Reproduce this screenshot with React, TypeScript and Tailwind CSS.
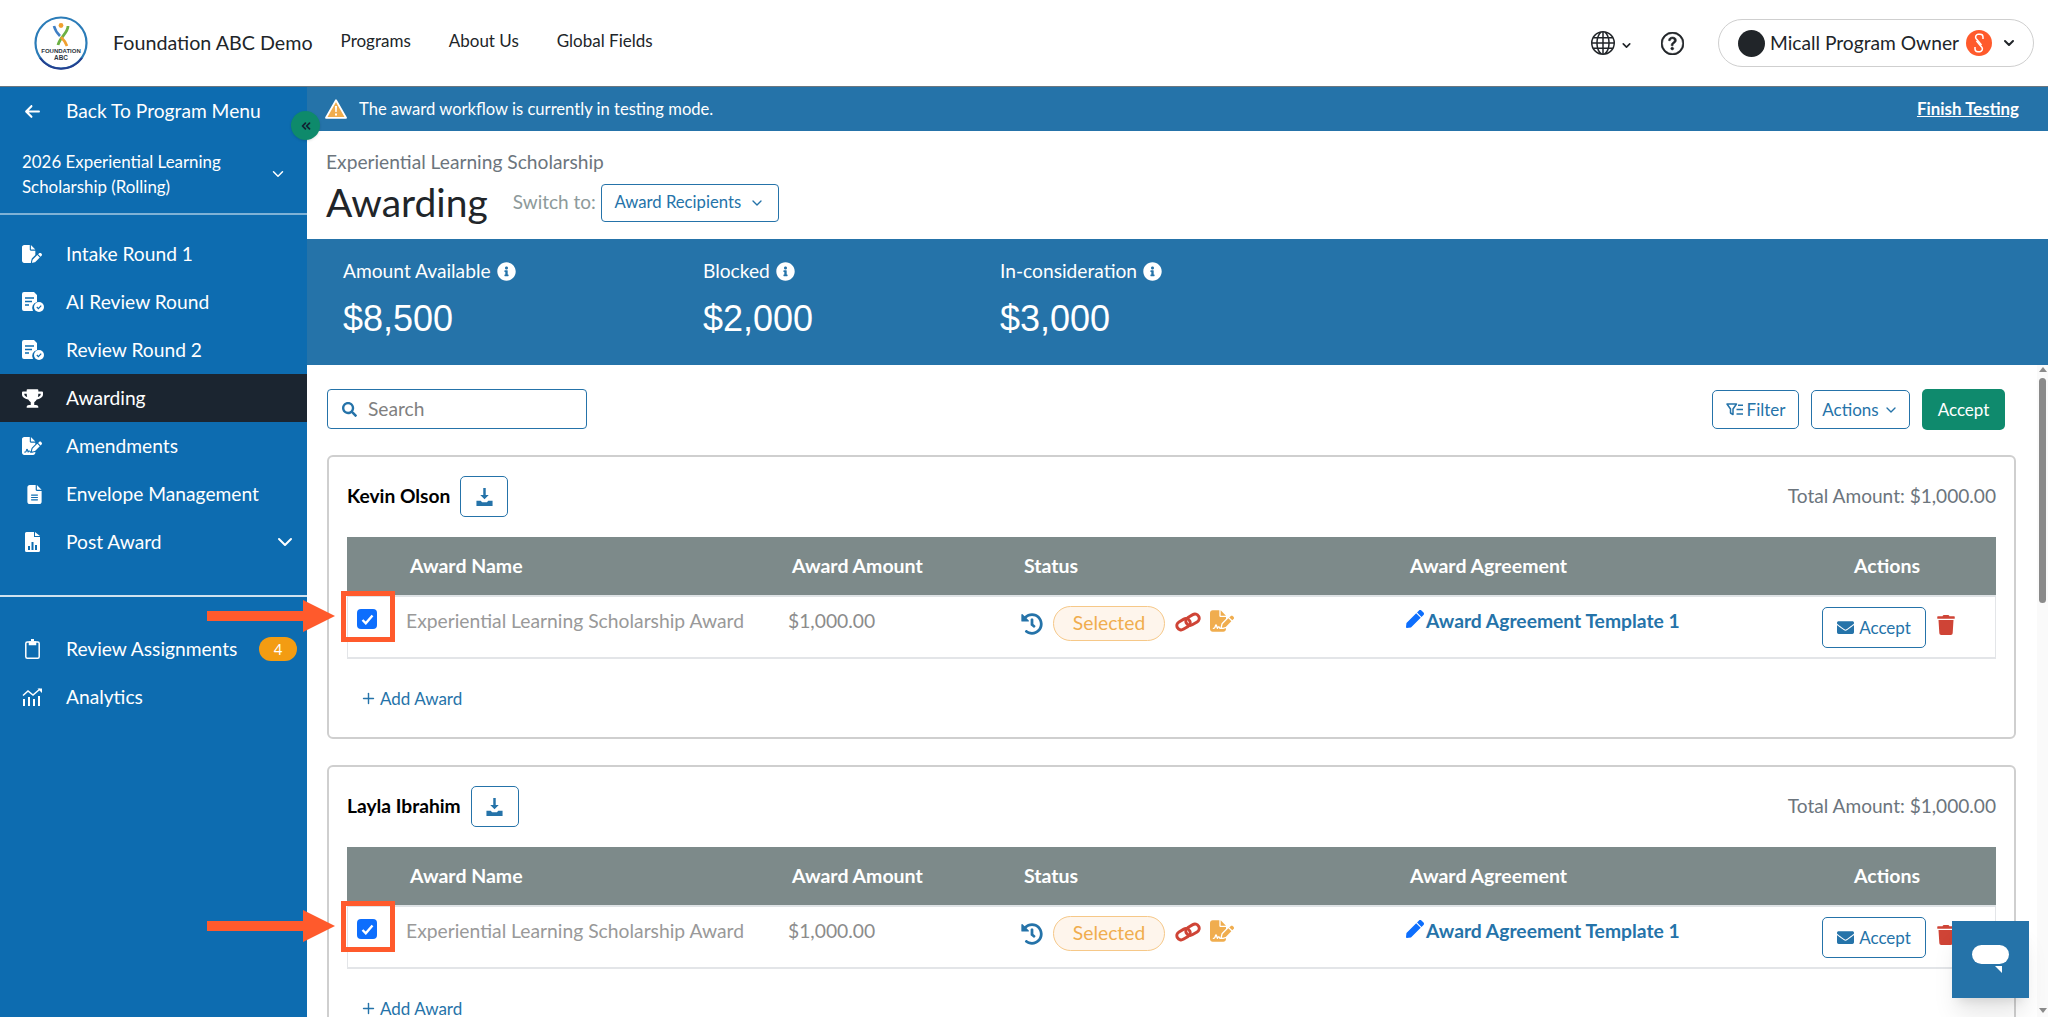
import { ChevronDown, ChevronsLeft, Plus } from "lucide-react";
import { BsGlobe, BsQuestionCircle } from "react-icons/bs";
import {
  FaEnvelope,
  FaHistory,
  FaInfoCircle,
  FaPen,
  FaSearch,
  FaTrash,
  FaTrophy,
} from "react-icons/fa";
import { FaArrowLeft, FaFileLines, FaFilePen, FaFileSignature } from "react-icons/fa6";

/* ---------------- Drawn icons ---------------- */

function ReviewIcon() {
  return (
    <svg width="22" height="20" viewBox="0 0 22 20">
      <path d="M2 0h10l3 3v7a6 6 0 0 0-4 9H2a2 2 0 0 1-2-2V2a2 2 0 0 1 2-2z" fill="#fff" />
      <path d="M3 6h9M3 9.5h7M3 13h4" stroke="#0d6cb0" strokeWidth="1.6" />
      <circle cx="17" cy="15" r="5" fill="#fff" />
      <path d="M14.8 15l1.6 1.6 2.8-3" stroke="#0d6cb0" strokeWidth="1.2" fill="none" />
    </svg>
  );
}

function ChartFileIcon() {
  return (
    <svg width="15" height="20" viewBox="0 0 15 20">
      <path d="M1.5 0H9v5h6v13.5a1.5 1.5 0 0 1-1.5 1.5h-12A1.5 1.5 0 0 1 0 18.5v-17A1.5 1.5 0 0 1 1.5 0zM10 0l5 4h-5z" fill="#fff" />
      <path d="M3 14h2v4H3zM6.5 10h2v8h-2zM10 13h2v5h-2z" fill="#0d6cb0" />
    </svg>
  );
}

function ClipboardIcon() {
  return (
    <svg width="15" height="20" viewBox="0 0 15 20" fill="none" stroke="#fff" strokeWidth="1.5">
      <rect x="0.8" y="3" width="13.4" height="16.2" rx="1.5" />
      <path d="M4.5 3h6v2.5h-6z" fill="#fff" />
      <path d="M6 1h3" strokeWidth="2" />
    </svg>
  );
}

function AnalyticsIcon() {
  return (
    <svg width="20" height="18" viewBox="0 0 20 18" fill="#fff">
      <path d="M1 11h2v7H1zM6 9h2v9H6zM11 11h2v7h-2zM16 8h2v10h-2z" />
      <path d="M1 7.5l5-4.5 5 4 7-6" stroke="#fff" strokeWidth="1.5" fill="none" />
      <path d="M15.5 0.5H20V5z" />
    </svg>
  );
}

function WarningIcon() {
  return (
    <svg width="22" height="20" viewBox="0 0 22 20">
      <path d="M11 1.2L21 18.8H1z" fill="#f0ad4e" stroke="#fff" strokeWidth="1.8" strokeLinejoin="round" />
      <path d="M10 7h2l-.3 6h-1.4zM10 14.4h2v2h-2z" fill="#fff" />
    </svg>
  );
}

function DownloadIcon() {
  return (
    <svg width="17" height="18" viewBox="0 0 17 19" fill="#2573a9">
      <path d="M7.2 0h2.6v7.5H13L8.5 12 4 7.5h3.2z" />
      <path d="M0 13.5h4.5L6 15h5l1.5-1.5H17V19H0z" />
    </svg>
  );
}

function FilterIcon() {
  return (
    <svg width="17" height="13" viewBox="0 0 17 13" fill="none" stroke="#2573a9" strokeWidth="1.5">
      <path d="M1 1h9.5L7 6v5.5L4.5 10V6z" strokeLinejoin="round" />
      <path d="M12 2.2h5M10.5 6.5H17M10.5 11H17" />
    </svg>
  );
}

function ChainIcon() {
  return (
    <svg width="26" height="20" viewBox="0 0 26 20" fill="none" stroke="#cf4436" strokeWidth="3">
      <rect x="1.5" y="8" width="14" height="8.5" rx="4.2" transform="rotate(-30 8.5 12.2)" />
      <rect x="10.5" y="3.5" width="14" height="8.5" rx="4.2" transform="rotate(-30 17.5 7.7)" />
    </svg>
  );
}

function Logo() {
  return (
    <svg width="54" height="54" viewBox="0 0 54 54" className="[font-family:'Liberation_Sans',sans-serif]">
      <circle cx="27" cy="27" r="25.5" fill="#fff" stroke="#2b7cb8" strokeWidth="2.2" />
      <path d="M6 42a26 26 0 0 0 42 0" fill="none" stroke="#253f8f" strokeWidth="2" />
      <circle cx="27" cy="9.5" r="2.4" fill="#f0a030" />
      <path d="M20 10c1 4 3 7 6 10" stroke="#3f7fc4" strokeWidth="2.6" fill="none" />
      <path d="M34 10c0 7-8 11-10 19" stroke="#6cb043" strokeWidth="2.8" fill="none" />
      <path d="M27 21c3 3 5 6 6 9" stroke="#f0a030" strokeWidth="2.6" fill="none" />
      <text x="27" y="37" textAnchor="middle" fontSize="6" fontWeight="700" fill="#2b3440">FOUNDATION</text>
      <text x="27" y="44" textAnchor="middle" fontSize="6.4" fontWeight="700" fill="#2b3440">ABC</text>
    </svg>
  );
}

/* ---------------- Sidebar ---------------- */

function NavItem({ icon, label, active, children }: any) {
  return (
    <div className={`flex items-center h-12 pl-[22px] pr-[10px] ${active ? "bg-[#1b2530]" : ""}`}>
      <span className="w-[44px] flex items-center">{icon}</span>
      <span className="flex-1 text-white text-[19.2px]">{label}</span>
      {children}
    </div>
  );
}

function Sidebar() {
  return (
    <aside className="w-[307px] shrink-0 bg-[#0d6cb0] text-white h-full relative">
      <div className="flex items-center h-[48px] pl-[24px]">
        <FaArrowLeft size={17} className="mr-[25px]" />
        <span className="text-[19.2px]">Back To Program Menu</span>
      </div>
      <div className="flex items-center h-[80px] border-b-2 border-[#7fb2d6] pl-[22px] pr-[20px]">
        <span className="flex-1 text-[16.9px] leading-[25px]">
          2026 Experiential Learning
          <br />
          Scholarship (Rolling)
        </span>
        <ChevronDown size={18} />
      </div>
      <div className="pt-[15px]">
        <NavItem icon={<FaFilePen size={20} />} label="Intake Round 1" />
        <NavItem icon={<ReviewIcon />} label="AI Review Round" />
        <NavItem icon={<ReviewIcon />} label="Review Round 2" />
        <NavItem icon={<FaTrophy size={21} />} label="Awarding" active />
        <NavItem icon={<FaFileSignature size={20} />} label="Amendments" />
        <NavItem icon={<span className="pl-[3px]"><FaFileLines size={19} /></span>} label="Envelope Management" />
        <NavItem icon={<span className="pl-[3px] flex"><ChartFileIcon /></span>} label="Post Award">
          <ChevronDown size={24} strokeWidth={2} />
        </NavItem>
      </div>
      <div className="mt-[29px] border-t-2 border-[#cfe2ef] pt-[28px]">
        <NavItem icon={<span className="pl-[3px] flex"><ClipboardIcon /></span>} label="Review Assignments">
          <span className="w-[38px] h-[24px] rounded-full bg-[#f39c12] flex items-center justify-center text-[15px]">4</span>
        </NavItem>
        <NavItem icon={<span className="flex"><AnalyticsIcon /></span>} label="Analytics" />
      </div>
      {/* collapse toggle sits over the sidebar edge */}
      <div className="absolute left-[291px] top-[24px] w-[29px] h-[29px] rounded-full bg-[#0e8a6b] flex items-center justify-center shadow z-10">
        <ChevronsLeft size={14} strokeWidth={3} className="text-[#123]" />
      </div>
    </aside>
  );
}

/* ---------------- Main parts ---------------- */

function Stat({ label, value, width }: any) {
  return (
    <div className={width}>
      <div className="flex items-center gap-[6px] text-[19.2px] text-white leading-[24px]">
        {label}
        <FaInfoCircle size={19} />
      </div>
      <div className="mt-[16px] text-white text-[36px] leading-[40px] [font-family:'Liberation_Sans',Arial,sans-serif]">
        {value}
      </div>
    </div>
  );
}

function AwardCard({ name }: any) {
  return (
    <section className="border-2 border-[#cfcfcf] rounded-[6px] bg-white h-[284px] px-[18px] pt-[18px]">
      <div className="flex items-center h-[43px]">
        <span className="font-bold text-black text-[19.2px]">{name}</span>
        <button className="ml-[10px] w-[48px] h-[41px] border border-[#2573a9] rounded-[5px] flex items-center justify-center">
          <DownloadIcon />
        </button>
        <span className="ml-auto text-[19.1px] text-[#6c757d]">Total Amount: $1,000.00</span>
      </div>
      <div className="mt-[19px] grid grid-cols-[58px_382px_233px_385px_416px_1fr] h-[60px] items-center bg-[#7d8a8a] text-white font-bold text-[19.5px] border-b-2 border-[#dfe3e6]">
        <span />
        <span className="pl-[5px]">Award Name</span>
        <span className="pl-[5px]">Award Amount</span>
        <span className="pl-[4px]">Status</span>
        <span className="pl-[5px]">Award Agreement</span>
        <span className="pl-[33px]">Actions</span>
      </div>
      <div className="relative grid grid-cols-[58px_382px_233px_385px_416px_1fr] h-[62px] border-x border-b-2 border-[#e3e5e8] text-[19.3px] text-[#999]">
        <div className="relative pl-[9px] pt-[12px]">
          <span className="w-5 h-5 rounded-[4px] bg-[#0d6efd] flex items-center justify-center">
            <svg width="13" height="11" viewBox="0 0 13 11" fill="none" stroke="#fff" strokeWidth="2.4">
              <path d="M1.5 6l3.3 3.3L11.5 1.5" />
            </svg>
          </span>
        </div>
        <div className="pt-[11px] leading-[26px] text-[#999]">Experiential Learning Scholarship Award</div>
        <div className="pt-[11px] leading-[26px] text-[#8c8c8c]">$1,000.00</div>
        <div className="flex items-start pt-[9px]">
          <FaHistory size={22} className="text-[#2573a9] mt-[7px]" />
          <span className="ml-[10px] w-[112px] h-[35px] rounded-full bg-[#fef5ec] border border-[#f6c888] text-[#f0ad4e] flex items-center justify-center">
            Selected
          </span>
          <span className="ml-[10px] mt-[6px] flex"><ChainIcon /></span>
          <FaFileSignature size={24} className="text-[#f0ad4e] ml-[9px] mt-[3px]" />
        </div>
        <div className="flex items-start pt-[11px] font-bold text-[#2573a9] leading-[26px]">
          <FaPen size={18} className="text-[#0d6efd] mt-[2px] mr-[2px]" />
          Award Agreement Template 1
        </div>
        <div className="flex items-start pt-[10px]">
          <button className="w-[104px] h-[41px] border border-[#2573a9] rounded-[5px] text-[#2573a9] text-[17px] flex items-center justify-center gap-[5px]">
            <FaEnvelope size={17} />
            Accept
          </button>
          <FaTrash size={20} className="text-[#cf4436] ml-[10px] mt-[8px]" />
        </div>

        {/* tutorial callout drawn on top of the screenshot */}
        <div className="absolute left-[-7px] top-[-6px] w-[54px] h-[51px] border-[5px] border-[#ff5a2c] z-10" />
        <div className="absolute left-[-141px] top-[3px] flex items-center z-10">
          <div className="w-[96px] h-[10px] bg-[#ff5a2c]" />
          <div className="w-0 h-0 border-y-[16px] border-y-transparent border-l-[32px] border-l-[#ff5a2c]" />
        </div>
      </div>
      <div className="mt-[27px] pl-[13px] flex items-center gap-[3px] text-[17px] text-[#2573a9]">
        <Plus size={17} strokeWidth={2} />
        Add Award
      </div>
    </section>
  );
}

function Scrollbar() {
  return (
    <div className="w-[11px] shrink-0 bg-[#fafafa] flex flex-col items-center pt-[2px]">
      <div className="w-0 h-0 border-x-[4px] border-x-transparent border-b-[5px] border-b-[#8a8a8a]" />
      <div className="w-[7px] h-[225px] rounded-full bg-[#8a8a8a] mt-[6px]" />
      <div className="mt-auto mb-[4px] w-0 h-0 border-x-[4px] border-x-transparent border-t-[5px] border-t-[#8a8a8a]" />
    </div>
  );
}

export default function App() {
  return (
    <div className="w-full h-screen overflow-hidden bg-white relative flex flex-col text-[#212529] [font-family:Lato,sans-serif]">
      {/* Navbar */}
      <header className="h-[87px] shrink-0 bg-white border-b border-[#6b7780] flex items-center pl-[34px] pr-[14px]">
        <Logo />
        <span className="ml-[25px] text-[19.7px]">Foundation ABC Demo</span>
        <nav className="flex items-center gap-[38px] ml-[28px] text-[17px] -mt-[5px]">
          <a>Programs</a>
          <a>About Us</a>
          <a>Global Fields</a>
        </nav>
        <div className="ml-auto flex items-center">
          <BsGlobe size={24} />
          <ChevronDown size={13} strokeWidth={3} className="ml-[5px] mt-[5px]" />
          <BsQuestionCircle size={23} className="ml-[28px] stroke-[0.4]" />
          <div className="ml-[34px] w-[316px] h-[48px] rounded-full border border-[#cfcfcf] flex items-center pl-[19px] pr-[16px]">
            <span className="w-[27px] h-[27px] rounded-full bg-[#212529] shrink-0" />
            <span className="ml-[5px] text-[19.2px] whitespace-nowrap">Micall Program Owner</span>
            <span className="ml-[7px] w-[26px] h-[26px] rounded-full bg-[#ff5a2c] shrink-0 flex items-center justify-center">
              <svg width="12" height="20" viewBox="0 0 12 20" fill="none" stroke="#fff" strokeWidth="1.5">
                <path d="M8.5 12L3 5.5a2.8 2.8 0 0 1 2-4.2h2.2A2.8 2.8 0 0 1 10 4v2" />
                <path d="M3.5 8L9 14.5a2.8 2.8 0 0 1-2 4.2H4.8A2.8 2.8 0 0 1 2 16v-2" />
              </svg>
            </span>
            <ChevronDown size={16} strokeWidth={3} className="ml-auto" />
          </div>
        </div>
      </header>

      <div className="flex flex-1 min-h-0">
        <Sidebar />
        <main className="flex-1 min-w-0 flex flex-col">
          <div className="h-[44px] shrink-0 bg-[#2573a9] flex items-center pl-[18px] pr-[29px] text-white text-[16.6px]">
            <WarningIcon />
            <span className="ml-[12px]">The award workflow is currently in testing mode.</span>
            <a className="ml-auto font-bold underline text-[16.9px]">Finish Testing</a>
          </div>

          <div className="h-[108px] shrink-0 pl-[19px] pt-[17px]">
            <div className="text-[19.2px] leading-[28px] text-[#6c757d]">Experiential Learning Scholarship</div>
            <div className="flex items-center">
              <h1 className="text-[39px] leading-[52px] text-[#212529]">Awarding</h1>
              <span className="ml-[25px] text-[19px] text-[#8d9a9a]">Switch to:</span>
              <button className="ml-[5px] mt-[2px] w-[178px] h-[38px] border border-[#2573a9] rounded-[4px] text-[#2573a9] text-[16.7px] flex items-center justify-center gap-[8px]">
                Award Recipients
                <ChevronDown size={16} />
              </button>
            </div>
          </div>

          <div className="h-[126px] shrink-0 bg-[#2573a9] flex pl-[36px] pt-[20px]">
            <Stat label="Amount Available" value="$8,500" width="w-[360px]" />
            <Stat label="Blocked" value="$2,000" width="w-[297px]" />
            <Stat label="In-consideration" value="$3,000" width="w-[300px]" />
          </div>

          <div className="flex flex-1 min-h-0">
            <div className="flex-1 min-w-0 pl-[20px] pr-[21px] pt-[24px]">
              <div className="flex items-center h-[41px]">
                <div className="w-[260px] h-[40px] -mt-[1px] border border-[#2573a9] rounded-[4px] flex items-center pl-[14px] text-[19.2px] text-[#808080]">
                  <FaSearch size={15} className="text-[#2573a9]" />
                  <span className="ml-[11px]">Search</span>
                </div>
                <div className="ml-auto flex items-center gap-[12px] pr-[11px]">
                  <button className="w-[87px] h-[39px] border border-[#2573a9] rounded-[5px] text-[#2573a9] text-[17px] flex items-center justify-center gap-[4px]">
                    <FilterIcon />
                    Filter
                  </button>
                  <button className="w-[99px] h-[39px] border border-[#2573a9] rounded-[5px] text-[#2573a9] text-[17px] flex items-center justify-center gap-[4px]">
                    Actions
                    <ChevronDown size={16} />
                  </button>
                  <button className="w-[83px] h-[41px] rounded-[5px] bg-[#0f8a6d] text-white text-[17px]">Accept</button>
                </div>
              </div>
              <div className="mt-[25px] flex flex-col gap-[26px]">
                <AwardCard name="Kevin Olson" />
                <AwardCard name="Layla Ibrahim" />
              </div>
            </div>
            <Scrollbar />
          </div>
        </main>
      </div>

      {/* chat launcher floats over the page */}
      <div className="absolute right-[19px] bottom-[19px] w-[77px] h-[77px] bg-[#2573a9] flex items-center justify-center shadow-xl z-20">
        <svg width="38" height="30" viewBox="0 0 38 30" fill="#fff">
          <rect x="0" y="0" width="37" height="19" rx="9.5" />
          <path d="M23 21h7v7z" />
        </svg>
      </div>
    </div>
  );
}
